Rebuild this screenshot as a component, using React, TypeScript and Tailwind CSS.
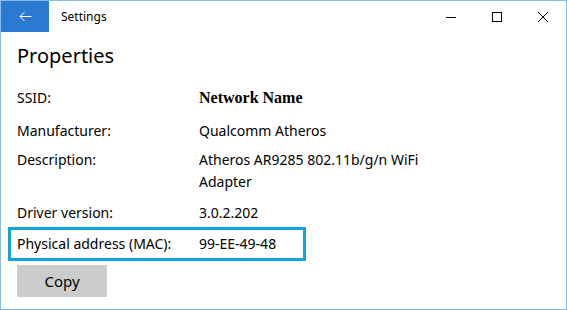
import React from "react";

const font = { fontFamily: '"Segoe UI", "Noto Sans", sans-serif' };

function Row({ label, children, className = "" }: { label: string; children: React.ReactNode; className?: string }) {
  return (
    <div className={`flex text-[14px] leading-[22px] text-black ${className}`}>
      <div className="w-[182px] shrink-0">{label}</div>
      <div className="w-[235px]">{children}</div>
    </div>
  );
}

export default function App() {
  return (
    <div
      className="w-[567px] h-[310px] bg-white border border-[#86bdf2] flex flex-col overflow-hidden"
      style={font}
    >
      {/* Title bar */}
      <div className="h-[31px] flex items-center shrink-0">
        <div className="w-[48px] h-full bg-[#2b7ad1] flex items-center justify-center">
          <svg width="13" height="11" viewBox="0 0 13 11" fill="none" stroke="white" strokeWidth="1">
            <path d="M12.5 5.5H1M5.5 1L1 5.5l4.5 4.5" />
          </svg>
        </div>
        <div className="ml-[12px] text-[12px] text-black">Settings</div>
        <div className="ml-auto flex h-full">
          <div className="w-[46px] h-full flex items-center justify-center">
            <svg width="10" height="10" viewBox="0 0 10 10" stroke="black" strokeWidth="1">
              <path d="M0 5.5H10" />
            </svg>
          </div>
          <div className="w-[46px] h-full flex items-center justify-center">
            <svg width="10" height="10" viewBox="0 0 10 10" fill="none" stroke="black" strokeWidth="1">
              <rect x="0.5" y="0.5" width="9" height="9" />
            </svg>
          </div>
          <div className="w-[46px] h-full flex items-center justify-center">
            <svg width="10" height="10" viewBox="0 0 10 10" stroke="black" strokeWidth="1">
              <path d="M0 0L10 10M10 0L0 10" />
            </svg>
          </div>
        </div>
      </div>

      {/* Content */}
      <div className="pl-[16px] flex flex-col">
        <div className="mt-[10px] text-[20px] leading-[28px] text-black">Properties</div>

        <Row label="SSID:" className="mt-[17px]">
          <span
            className="font-bold text-[16px]"
            style={{ fontFamily: '"Liberation Serif", "DejaVu Serif", serif' }}
          >
            Network Name
          </span>
        </Row>
        <Row label="Manufacturer:" className="mt-[11px]">Qualcomm Atheros</Row>
        <Row label="Description:" className="mt-[7px]">
          Atheros AR9285 802.11b/g/n WiFi Adapter
        </Row>
        <Row label="Driver version:" className="mt-[9px]">3.0.2.202</Row>

        <div className="mt-[3px] ml-[-9px] w-[298px] h-[34px] border-[3px] border-[#13a2e2] pl-[6px] pt-[3px]">
          <Row label="Physical address (MAC):">99-EE-49-48</Row>
        </div>

        <button className="mt-[4px] w-[90px] h-[32px] bg-[#cccccc] text-[15px] text-black flex items-center justify-center">
          Copy
        </button>
      </div>
    </div>
  );
}
